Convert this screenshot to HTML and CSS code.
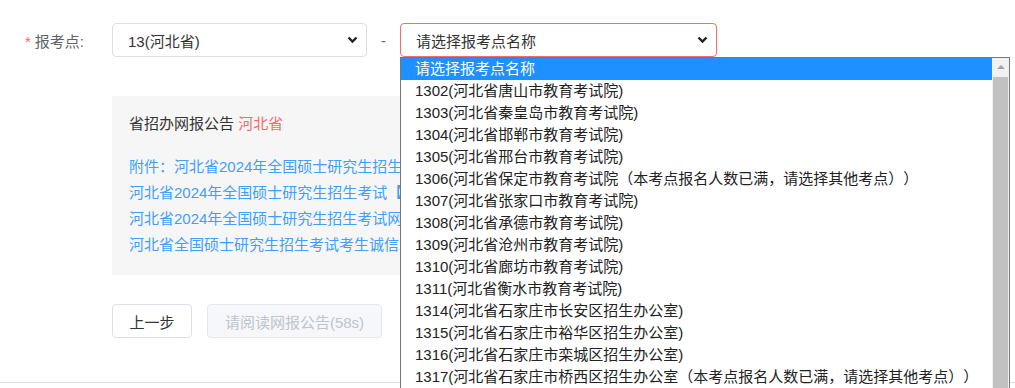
FILE: index.html
```html
<!DOCTYPE html>
<html lang="zh-CN">
<head>
    <meta charset="UTF-8">
    <title>报考点选择</title>
    <link rel="stylesheet" href="styles.css">
</head>
<body>
    <div class="form">
        <div class="form-row">
            <label class="form-label"><span class="req">*</span>报考点:</label>
            <div class="select-box select-prov">
                <span>13(河北省)</span>
                <svg class="chev" width="11" height="8" viewBox="0 0 11 8"><path d="M1.5 1.5 L5.5 5.5 L9.5 1.5" fill="none" stroke="#222" stroke-width="2.4"/></svg>
            </div>
            <span class="dash">-</span>
            <div class="select-box select-site">
                <span>请选择报考点名称</span>
                <svg class="chev" width="11" height="8" viewBox="0 0 11 8"><path d="M1.5 1.5 L5.5 5.5 L9.5 1.5" fill="none" stroke="#222" stroke-width="2.4"/></svg>
            </div>
        </div>

        <div class="notice">
            <div class="notice-title">省招办网报公告 <span class="prov">河北省</span></div>
            <a class="notice-link" href="#">附件：河北省2024年全国硕士研究生招生考试报名点分布表</a>
            <a class="notice-link" href="#">河北省2024年全国硕士研究生招生考试【网上报名】公告</a>
            <a class="notice-link" href="#">河北省2024年全国硕士研究生招生考试网上确认公告</a>
            <a class="notice-link" href="#">河北省全国硕士研究生招生考试考生诚信承诺书</a>
        </div>

        <div class="actions">
            <button class="btn">上一步</button>
            <button class="btn btn-disabled">请阅读网报公告(58s)</button>
        </div>
    </div>
    <div class="divider"></div>

    <!-- 展开的下拉列表 -->
    <div class="option-list">
        <ul class="options">
            <li class="active">请选择报考点名称</li>
            <li>1302(河北省唐山市教育考试院)</li>
            <li>1303(河北省秦皇岛市教育考试院)</li>
            <li>1304(河北省邯郸市教育考试院)</li>
            <li>1305(河北省邢台市教育考试院)</li>
            <li>1306(河北省保定市教育考试院（本考点报名人数已满，请选择其他考点））</li>
            <li>1307(河北省张家口市教育考试院)</li>
            <li>1308(河北省承德市教育考试院)</li>
            <li>1309(河北省沧州市教育考试院)</li>
            <li>1310(河北省廊坊市教育考试院)</li>
            <li>1311(河北省衡水市教育考试院)</li>
            <li>1314(河北省石家庄市长安区招生办公室)</li>
            <li>1315(河北省石家庄市裕华区招生办公室)</li>
            <li>1316(河北省石家庄市栾城区招生办公室)</li>
            <li>1317(河北省石家庄市桥西区招生办公室（本考点报名人数已满，请选择其他考点））</li>
        </ul>
        <div class="scrollbar">
            <span class="arrow-up"></span>
            <span class="thumb"></span>
        </div>
    </div>
</body>
</html>
```

FILE: styles.css
```css
body {
    margin: 0;
    background: #fff;
    font-family: "Liberation Sans", Arial, "Noto Sans CJK SC", sans-serif;
    font-size: 15px;
    color: #606266;
    overflow: hidden;
    text-spacing-trim: space-all;
}
.form {
    padding: 23px 0 0 25px;
}
.form-row {
    display: flex;
    align-items: center;
    height: 34px;
}
.form-label {
    width: 87px;
    color: #606266;
}
.req {
    color: #f56c6c;
    margin-right: 4px;
}
.select-box {
    box-sizing: border-box;
    height: 34px;
    border: 1px solid #dcdfe6;
    border-radius: 4px;
    display: flex;
    align-items: center;
    justify-content: space-between;
    padding: 0 8px 0 15px;
    color: #333;
}
.select-prov { width: 255px; }
.select-site { width: 317px; border-color: #f56c6c; }
.dash {
    width: 33px;
    text-align: center;
    color: #606266;
}
.notice {
    margin: 39px 0 0 87px;
    width: 800px;
    height: 179px;
    box-sizing: border-box;
    background: #f6f6f6;
    padding: 17px 17px;
    display: flex;
    flex-direction: column;
    align-items: flex-start;
}
.notice-title {
    color: #333;
    line-height: 22px;
    margin-bottom: 19px;
}
.prov { color: #f56c6c; }
/* 下拉列表盖住了公告的右半部分 */
.notice-link {
    color: #409eff;
    text-decoration: none;
    line-height: 26px;
    white-space: nowrap;
    overflow: hidden;
    max-width: 271px;
}
.actions {
    display: flex;
    gap: 15px;
    margin: 29px 0 0 87px;
}
.btn {
    box-sizing: border-box;
    height: 34px;
    width: 80px;
    padding: 0;
    border: 1px solid #dcdfe6;
    border-radius: 4px;
    background: #fff;
    color: #333;
    font: inherit;
    white-space: nowrap;
}
.btn-disabled {
    width: 175px;
    background: #f5f7fa;
    border-color: #e4e7ed;
    color: #c0c4cc;
}
.divider {
    margin-top: 44px;
    border-top: 1px solid #dcdfe6;
}
.option-list {
    position: absolute;
    left: 400px;
    top: 57px;
    width: 610px;
    height: 340px;
    box-sizing: border-box;
    border: 1px solid #767676;
    border-bottom: 0;
    background: #fff;
    display: flex;
}
.options {
    list-style: none;
    margin: 0;
    padding: 0;
    flex: 1;
    overflow: hidden;
}
.options li {
    height: 22px;
    line-height: 22px;
    padding-left: 14px;
    color: #222;
    white-space: nowrap;
}
.options li.active {
    background: #1e90ff;
    color: #fff;
}
.scrollbar {
    width: 17px;
    background: #f1f1f1;
    display: flex;
    flex-direction: column;
    align-items: center;
}
.arrow-up {
    margin-top: 7px;
    width: 0;
    height: 0;
    border-left: 4px solid transparent;
    border-right: 4px solid transparent;
    border-bottom: 4px solid #a3a3a3;
}
.thumb {
    margin-top: 8px;
    width: 15px;
    flex: 1;
    background: #c1c1c1;
}
```
